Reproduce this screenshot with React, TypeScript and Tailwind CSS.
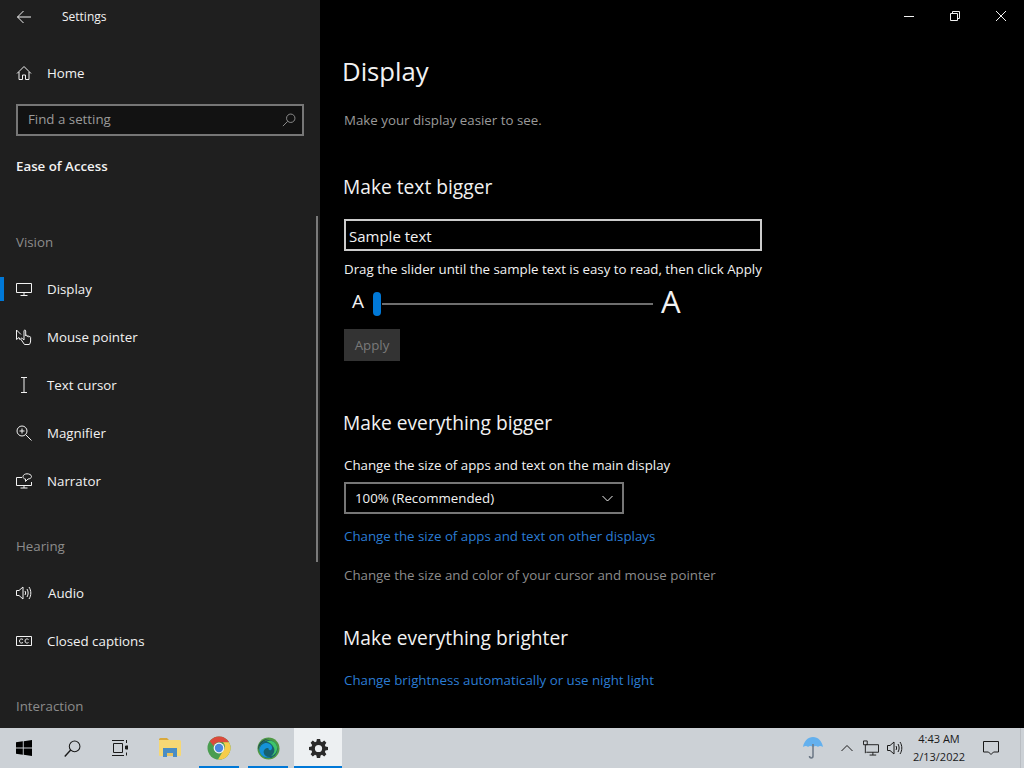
import React from "react";

const stroke = { fill: "none", stroke: "currentColor", strokeWidth: 1 };

function Ico({ children, size = 16 }: { children: React.ReactNode; size?: number }) {
  return (
    <svg width={size} height={size} viewBox="0 0 16 16" {...stroke}>
      {children}
    </svg>
  );
}

const HomeIcon = () => (
  <Ico>
    <path d="M1 8.500 8 1.500l7 7M3 7v7.500h3.500V10h3v4.500H13V7" />
  </Ico>
);
const DisplayIcon = () => (
  <Ico>
    <path d="M.5 2.500h15v9H.5zM8 11.500v3M4.500 14.500h7" />
  </Ico>
);
const PointerIcon = () => (
  <Ico>
    <path d="M.5 1v9.500L3 8.500l1.200 2.500M.5 1 5 5.500" />
    <path d="M8.500 15.500 5 10.500c-.7-1.100.5-1.900 1.400-1L8 11V2c0-1.300 1.700-1.300 1.700 0v5c0-1 1.600-1 1.600 0v.6c0-1 1.600-1 1.600 0v.6c0-.9 1.700-.9 1.700.2V12c0 1.500-.5 2.500-1.300 3.500z" />
  </Ico>
);
const CursorIcon = () => (
  <Ico>
    <path d="M5 .5h6M5 15.500h6M8 .5v15" />
  </Ico>
);
const MagnifierIcon = () => (
  <Ico>
    <circle cx="6" cy="6" r="5" />
    <path d="M9.700 9.700 15.500 15.500M6 3.500v5M3.500 6h5" />
  </Ico>
);
const NarratorIcon = () => (
  <Ico>
    <path d="M6 4.500H.5v8h15V9M8 12.500v2.500M4.500 15h7" />
    <path d="M7 3.500C7 2 9 .8 11 .8s4.500 1 4.500 2.700S13.500 6 12 6L9.500 8.500V6C8 6 7 5 7 3.500z" />
  </Ico>
);
const AudioIcon = () => (
  <Ico>
    <path d="M.5 5.500h2.500L7 2v12l-4-3.500H.5zM9 6c.8 1.300.8 2.700 0 4M11 4c1.500 2.500 1.500 5.500 0 8M13 2c2.400 3.600 2.400 8.400 0 12" />
  </Ico>
);
const CaptionIcon = () => (
  <Ico>
    <path d="M.5 3.500h15v9H.5z" />
    <path d="M7 6.500C5.500 5.300 3.500 6 3.500 8s2 2.700 3.500 1.500M12.500 6.500C11 5.300 9 6 9 8s2 2.700 3.500 1.500" />
  </Ico>
);

function NavRow({ icon, label, gap = "ml-[15px]" }: { icon: React.ReactNode; label: string; gap?: string }) {
  return (
    <div className="flex h-12 items-center pl-4 text-[#f2f2f2]">
      <span className="flex w-4 shrink-0 justify-center">{icon}</span>
      <span className={`${gap} pt-0.5 text-[13.3px]`}>{label}</span>
    </div>
  );
}

function SectionLabel({ children, className }: { children: React.ReactNode; className: string }) {
  return <div className={`pl-4 text-[13.3px] leading-5 text-[#8c8c8c] ${className}`}>{children}</div>;
}

function Sidebar() {
  return (
    <aside className="relative h-full w-[320px] shrink-0 overflow-hidden bg-[#1f1f1f]">
      <div className="flex h-8 items-center pt-px text-[#f2f2f2]">
        <span className="ml-4 flex w-4 justify-center">
          <svg width="16" height="16" viewBox="0 0 16 16" {...stroke}>
            <path d="M15 8H1.500M7.500 2 1.500 8l6 6" />
          </svg>
        </span>
        <span className="ml-[30px] text-xs">Settings</span>
      </div>
      <div className="mt-[17px]">
        <NavRow icon={<HomeIcon />} label="Home" />
      </div>
      <div className="mx-4 mt-[7px] flex h-8 items-center justify-between border-2 border-[#767676] bg-[#121212] pl-2.5 pr-1.5 text-[13.3px] text-[#9a9a9a]">
        <span>Find a setting</span>
        <svg width="14" height="14" viewBox="0 0 16 16" {...stroke}>
          <circle cx="10" cy="6" r="4.800" />
          <path d="M6.500 9.500 1 15" />
        </svg>
      </div>
      <div className="mt-5 pl-4 text-[13.3px] font-semibold leading-5 text-[#f2f2f2]">Ease of Access</div>
      <SectionLabel className="mt-[56px]">Vision</SectionLabel>
      <div className="relative mt-[13px]">
        <span className="absolute left-0 top-3 h-6 w-1 bg-[#0078d7]" />
        <NavRow icon={<DisplayIcon />} label="Display" />
        <NavRow icon={<PointerIcon />} label="Mouse pointer" />
        <NavRow icon={<CursorIcon />} label="Text cursor" />
        <NavRow icon={<MagnifierIcon />} label="Magnifier" />
        <NavRow icon={<NarratorIcon />} label="Narrator" />
      </div>
      <SectionLabel className="mt-[31px]">Hearing</SectionLabel>
      <div className="mt-[13px]">
        <NavRow icon={<AudioIcon />} label="Audio" gap="ml-4" />
        <NavRow icon={<CaptionIcon />} label="Closed captions" />
      </div>
      <SectionLabel className="mt-[31px]">Interaction</SectionLabel>
      {/* overlay scrollbar */}
      <span className="absolute right-0.5 top-[216px] h-[346px] w-0.5 bg-[#7a7a7a]" />
    </aside>
  );
}

function WindowControls() {
  return (
    <div className="flex h-8 justify-end text-[#f2f2f2]">
      <span className="flex w-[46px] items-center justify-center">
        <svg width="10" height="10" viewBox="0 0 10 10" {...stroke}>
          <path d="M0 5.500h10" />
        </svg>
      </span>
      <span className="flex w-[46px] items-center justify-center">
        <svg width="10" height="10" viewBox="0 0 10 10" {...stroke}>
          <path d="M.5 2.500h7v7h-7zM2.500 2.500v-2h7v7h-2" />
        </svg>
      </span>
      <span className="flex w-[46px] items-center justify-center">
        <svg width="10" height="10" viewBox="0 0 10 10" {...stroke}>
          <path d="M0 0l10 10M10 0 0 10" />
        </svg>
      </span>
    </div>
  );
}

function MainPanel() {
  return (
    <main className="h-full flex-1 overflow-hidden bg-black">
      <WindowControls />
      <div className="pl-6">
        <h1 className="-ml-0.5 mt-[20px] text-[25.7px] leading-10 text-[#f2f2f2]">Display</h1>
        <p className="mt-[18px] text-[13.3px] leading-5 text-[#9a9a9a]">Make your display easier to see.</p>

        <h2 className="-ml-px mt-[43px] text-[19.2px] leading-7 text-[#f2f2f2]">Make text bigger</h2>
        <div className="mt-[18px] flex h-8 w-[418px] items-center border-2 border-[#cccccc] pl-[3px] pt-0.5 text-[15px] text-[#f2f2f2]">
          Sample text
        </div>
        <p className="mt-2 text-[13.3px] leading-5 text-[#f2f2f2]">
          Drag the slider until the sample text is easy to read, then click Apply
        </p>
        <div className="mt-[8px] flex h-[34px] items-center text-[#f2f2f2]">
          <span className="-mt-1.5 w-[29px] pl-2 text-[19px] leading-none">A</span>
          <span className="h-6 w-2 rounded-full bg-[#0078d7]" />
          <span className="ml-px h-0.5 w-[271px] bg-[#6e6e6e]" />
          <span className="-mt-1.5 ml-[8px] text-[31px] leading-none">A</span>
        </div>
        <div className="mt-[8px] flex h-8 w-14 items-center justify-center bg-[#333333] pt-0.5 text-[13.3px] text-[#7a7a7a]">
          Apply
        </div>

        <h2 className="-ml-px mt-[48px] text-[19.2px] leading-7 text-[#f2f2f2]">Make everything bigger</h2>
        <p className="mt-[18px] text-[13.3px] leading-5 text-[#f2f2f2]">Change the size of apps and text on the main display</p>
        <div className="mt-[7px] flex h-8 w-[280px] items-center justify-between border-2 border-[#767676] pl-[9px] pr-[9px] text-[13.3px] text-[#f2f2f2]">
          <span className="pt-0.5">100% (Recommended)</span>
          <svg width="11" height="7" viewBox="0 0 11 7" {...stroke}>
            <path d="M.5 1 5.500 6l5-5" />
          </svg>
        </div>
        <p className="mt-3 text-[13.3px] leading-5 text-[#2b7cd3]">Change the size of apps and text on other displays</p>
        <p className="mt-[19px] text-[13.3px] leading-5 text-[#8c8c8c]">Change the size and color of your cursor and mouse pointer</p>

        <h2 className="-ml-px mt-[39px] text-[19.2px] leading-7 text-[#f2f2f2]">Make everything brighter</h2>
        <p className="mt-[18px] text-[13.3px] leading-5 text-[#2b7cd3]">Change brightness automatically or use night light</p>
      </div>
    </main>
  );
}

function TaskButton({ children, className = "", mark = "" }: { children: React.ReactNode; className?: string; mark?: string }) {
  return (
    <div className={`relative flex h-10 w-12 items-center justify-center ${className}`}>
      {children}
      {mark && <span className={`absolute bottom-0 h-0.5 bg-[#0078d7] ${mark}`} />}
    </div>
  );
}

function Taskbar() {
  return (
    <footer className="flex h-10 shrink-0 items-center bg-[#ccd1d6] text-[#1a1a1a]">
      <TaskButton>
        <svg width="16" height="16" viewBox="0 0 16 16" fill="#000">
          <path d="M0 2.300 6.800 1.300V7.500H0zM7.700 1.200 16 0V7.500H7.700zM0 8.400h6.800v6.300L0 13.700zM7.700 8.400H16V16l-8.300-1.200z" />
        </svg>
      </TaskButton>
      <TaskButton>
        <svg width="17" height="17" viewBox="0 0 16 16" {...stroke}>
          <circle cx="10" cy="6" r="5" />
          <path d="M6.300 9.500.7 15.500" strokeWidth="1.300" />
        </svg>
      </TaskButton>
      <TaskButton>
        <svg width="16" height="16" viewBox="0 0 16 16" {...stroke}>
          <path d="M0 .5h12M0 15.500h12M1.500 3.500h9v9h-9z" />
          <path d="M14.500 0v3M14.500 12.500v3" />
          <path d="M13.500 6h2.500v3h-2.500z" fill="currentColor" />
        </svg>
      </TaskButton>
      <TaskButton className="ml-0.5">
        <svg width="22" height="20" viewBox="0 0 22 20">
          <path d="M0 1.500A1.500 1.500 0 0 1 1.500 0H8l2 2H0z" fill="#d9a93c" />
          <path d="M0 2h20.500A1.500 1.500 0 0 1 22 3.500V17a1 1 0 0 1-1 1H1a1 1 0 0 1-1-1z" fill="#f6d875" />
          <path d="M4 10h14v9h-4v-4H8v4H4z" fill="#4a8dc4" />
          <path d="M8 15h6v3H8z" fill="#e8c25f" />
        </svg>
      </TaskButton>
      <TaskButton className="ml-px" mark="inset-x-1">
        <svg width="24" height="24" viewBox="0 0 24 24">
          <circle cx="12" cy="12" r="11.500" fill="#4a9d50" />
          <path d="M12 .5A11.500 11.500 0 0 1 22 6.300H12A5.800 5.800 0 0 0 6.600 10L2.700 5.300A11.500 11.500 0 0 1 12 .5z" fill="#db4a3c" />
          <path d="M22 6.300A11.500 11.500 0 0 1 11 23.500l5-8.500a5.800 5.800 0 0 0 0-8.700z" fill="#f5cc4a" />
          <circle cx="12" cy="12" r="5.400" fill="#f2f2f2" />
          <circle cx="12" cy="12" r="4.200" fill="#4a87e0" />
        </svg>
      </TaskButton>
      <TaskButton className="ml-px" mark="inset-x-1">
        <svg width="23" height="23" viewBox="0 0 24 24">
          <circle cx="12" cy="12" r="11.500" fill="#4f9a45" />
          <path d="M1 14C.5 6 7 1.500 13 1.800 7 3 3 7 1 14z" fill="#1d4a55" />
          <circle cx="12" cy="12.500" r="9.500" fill="#17616f" />
          <path d="M2.500 13c1-5.500 6-8 10.500-6 3 1.500 3.500 5.500 1.500 6.500-1.500.8-3-.5-2.500-2-3-.5-5.500 2-5 5 .5 3 3.500 5 7.500 4.300C9.500 23 3 20 2.500 13z" fill="#1593d8" />
          <path d="M10 4.500c5-2 10.500 1 11 6.500.4 4.500-3 8.500-6.500 9 3.500-2.500 4.500-6 3-9C16 7.500 13 5.500 10 4.500z" fill="#3fc46a" />
        </svg>
      </TaskButton>
      <TaskButton className="ml-0.5 bg-[#edf0f2]" mark="inset-x-0">
        <svg width="19" height="19" viewBox="0 0 20 20">
          <path
            fillRule="evenodd"
            fill="#2a2a2a"
            d="M8.300 0h3.400l.5 2.700 1.500.6L16 1.700 18.300 4l-1.600 2.300.6 1.500 2.700.5v3.400l-2.700.5-.6 1.500 1.600 2.300-2.300 2.300-2.300-1.600-1.500.6-.5 2.700H8.300l-.5-2.700-1.500-.6L4 18.300 1.700 16l1.600-2.300-.6-1.500L0 11.700V8.300l2.700-.5.6-1.500L1.700 4 4 1.700l2.300 1.600 1.500-.6zM10 6.200a3.800 3.800 0 1 0 0 7.600 3.800 3.800 0 0 0 0-7.600z"
          />
        </svg>
      </TaskButton>
      <div className="ml-auto flex h-10 items-center">
        <svg className="mr-[18px]" width="20" height="24" viewBox="0 0 20 24">
          <path d="M10 1C5 1 1 5 0 11c2-1.500 4-1.500 5 0 1-1.500 3.500-1.500 5 0 1.500-1.500 4-1.500 5 0 1-1.500 3-1.500 5 0-1-6-5-10-10-10z" fill="#63b0ee" />
          <path d="M10 8v12c0 2.500-3.500 2.500-3.500 0" fill="none" stroke="#6b7785" strokeWidth="1.500" />
        </svg>
        <svg className="mr-[10px]" width="12" height="8" viewBox="0 0 12 8" {...stroke}>
          <path d="M.5 7 6 1.500 11.500 7" />
        </svg>
        <svg className="mr-2" width="16" height="16" viewBox="0 0 17 16" {...stroke}>
          <path d="M3.500 4.500H16.500v8H3.500M.5.500h4v4h-4zM7 15.500h7M10.500 12.500v3M2.500 4.500v9" />
        </svg>
        <AudioIcon />
        <div className="ml-1 w-[64px] text-center text-[11px] leading-[18px]">
          <div>4:43 AM</div>
          <div>2/13/2022</div>
        </div>
        <div className="ml-3 flex w-[37px] justify-start">
          <svg width="16" height="16" viewBox="0 0 16 16" {...stroke}>
            <path d="M.5 1.500h15v10.500h-5L8 14.500 5.500 12h-5z" />
          </svg>
        </div>
        <span className="h-10 w-px bg-[#b9bdc2]" />
        <span className="w-[3px]" />
      </div>
    </footer>
  );
}

export default function App() {
  return (
    <div className="flex h-screen flex-col overflow-hidden bg-black font-['Open_Sans','Noto_Sans',sans-serif]">
      <div className="flex min-h-0 flex-1">
        <Sidebar />
        <MainPanel />
      </div>
      <Taskbar />
    </div>
  );
}
